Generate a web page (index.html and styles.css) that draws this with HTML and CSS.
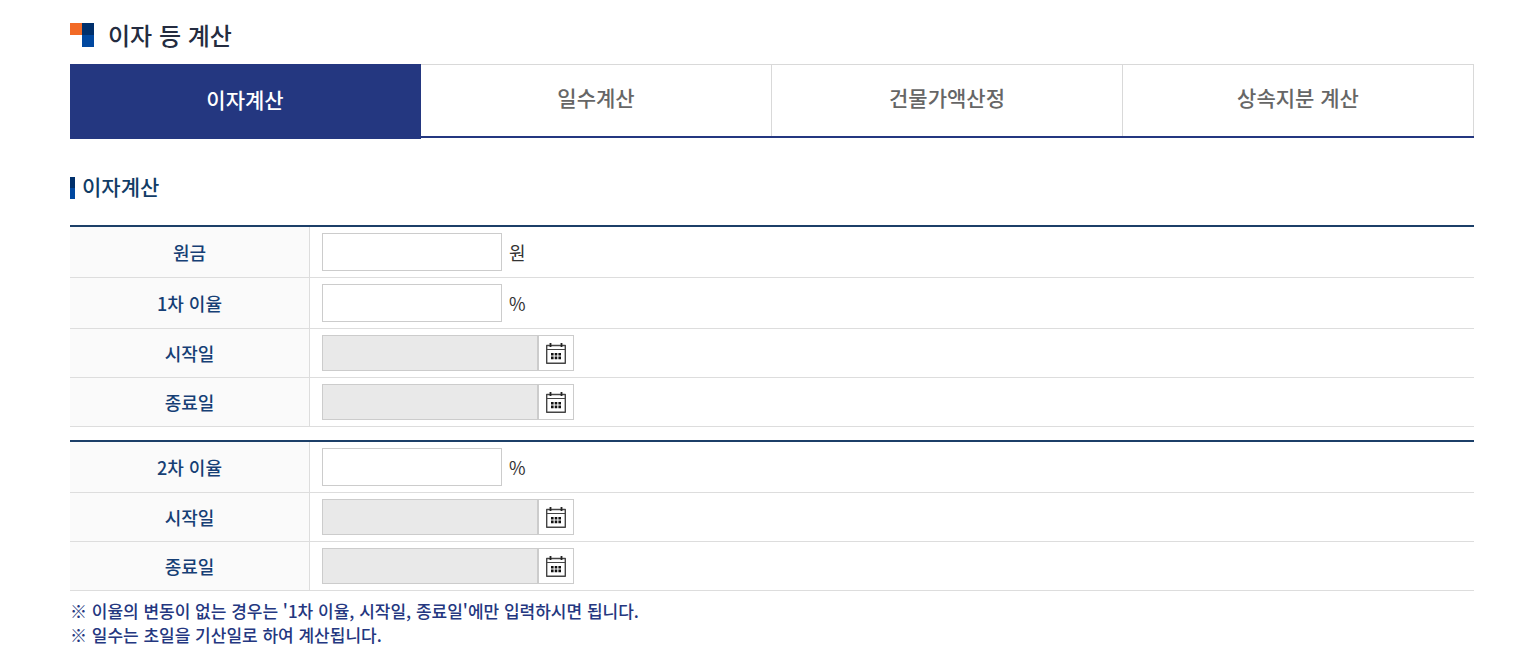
FILE: index.html
```html
<!DOCTYPE html>
<html lang="ko">
<head>
<meta charset="utf-8">
<title>이자 등 계산</title>
<link rel="stylesheet" href="styles.css">
</head>
<body>
<svg class="sprite" aria-hidden="true">
  <symbol id="calendar" viewBox="0 0 20 22">
    <path d="M.7 3.5h18.6v17.8H.7z" fill="none" stroke="#444" stroke-width="1.4" stroke-linejoin="round"/>
    <path d="M1 7.5h18" stroke="#444" stroke-width="1"/>
    <path d="M4.5 1v4M15.5 1v4" stroke="#222" stroke-width="1.8"/>
    <path d="M5 11h2.6v2.6H5zM8.7 11h2.6v2.6H8.7zM12.4 11H15v2.6h-2.6zM5 14.6h2.6v2.6H5zM8.7 14.6h2.6v2.6H8.7zM12.4 14.6H15v2.6h-2.6z" fill="#111"/>
  </symbol>
</svg>
<main class="page">
  <h1 class="page-title">
    <svg class="mark" viewBox="0 0 24 24" aria-hidden="true">
      <path fill="#f26a26" d="M0 0h12v12H0z"/>
      <path fill="#00306c" d="M12 0h12v12H12z"/>
      <path fill="#0048a0" d="M12 12h12v12H12z"/>
    </svg>
    이자 등 계산
  </h1>
  <nav class="tabs">
    <a class="tab active" href="#interest" aria-current="page">이자계산</a>
    <a class="tab" href="#days">일수계산</a>
    <a class="tab" href="#building">건물가액산정</a>
    <a class="tab" href="#inheritance">상속지분 계산</a>
  </nav>
  <h2 class="section-title">이자계산</h2>
  <form class="form">
    <table class="fields">
      <tr><th scope="row"><label for="principal">원금</label></th><td><div class="field"><input id="principal" type="text"><span>원</span></div></td></tr>
      <tr><th scope="row"><label for="rate1">1차 이율</label></th><td><div class="field"><input id="rate1" type="text"><span>%</span></div></td></tr>
      <tr><th scope="row"><label for="start1">시작일</label></th><td><div class="date"><input id="start1" type="text" readonly><button type="button" aria-label="시작일 선택"><svg><use href="#calendar"/></svg></button></div></td></tr>
      <tr><th scope="row"><label for="end1">종료일</label></th><td><div class="date"><input id="end1" type="text" readonly><button type="button" aria-label="종료일 선택"><svg><use href="#calendar"/></svg></button></div></td></tr>
    </table>
    <table class="fields">
      <tr><th scope="row"><label for="rate2">2차 이율</label></th><td><div class="field"><input id="rate2" type="text"><span>%</span></div></td></tr>
      <tr><th scope="row"><label for="start2">시작일</label></th><td><div class="date"><input id="start2" type="text" readonly><button type="button" aria-label="시작일 선택"><svg><use href="#calendar"/></svg></button></div></td></tr>
      <tr><th scope="row"><label for="end2">종료일</label></th><td><div class="date"><input id="end2" type="text" readonly><button type="button" aria-label="종료일 선택"><svg><use href="#calendar"/></svg></button></div></td></tr>
    </table>
  </form>
  <div class="notes">
    <p>※ 이율의 변동이 없는 경우는 '1차 이율, 시작일, 종료일'에만 입력하시면 됩니다.</p>
    <p>※ 일수는 초일을 기산일로 하여 계산됩니다.</p>
  </div>
</main>
</body>
</html>
```
FILE: styles.css
```css
* { box-sizing: border-box; }
body {
  margin: 0;
  background: #fff;
  color: #333;
  font: 400 18px/24px "Noto Sans CJK KR", "Noto Sans", sans-serif;
}
.sprite { position: absolute; width: 0; height: 0; }
.page { padding: 17px 54px 16px 70px; }
.page-title {
  display: flex;
  align-items: center;
  gap: 14px;
  margin: 0 0 11px;
  color: #242c40;
  font-size: 24px;
  font-weight: 500;
  line-height: 36px;
}
.mark { width: 24px; height: 24px; }
.tabs {
  display: grid;
  grid-template-columns: repeat(4, 1fr);
  height: 74px;
  border-bottom: 2px solid #243780;
}
.tab {
  display: flex;
  align-items: center;
  justify-content: center;
  border: 1px solid #d9d9d9;
  border-width: 1px 1px 0 0;
  color: #666;
  font-size: 21px;
  font-weight: 500;
  padding-bottom: 7px;
  text-decoration: none;
}
.tab.active {
  margin-bottom: -3px;
  background: #243780;
  border-color: #243780;
  color: #fff;
}
.section-title {
  display: flex;
  align-items: flex-end;
  gap: 7px;
  margin: 35px 0 26px;
  color: #113c66;
  font-size: 21px;
  font-weight: 500;
  line-height: 26px;
}
.section-title::before {
  content: "";
  width: 5px;
  height: 22px;
  background: linear-gradient(#00306c 50%, #0048a0 50%);
}
.form { display: grid; gap: 13px; }
.fields {
  width: 100%;
  table-layout: fixed;
  border-spacing: 0;
  border-top: 2px solid #1c3f68;
}
.fields th, .fields td { border-bottom: 1px solid #ddd; padding: 6px 12px; }
.fields th {
  width: 240px;
  padding: 0;
  background: #fafafa;
  border-right: 1px solid #ddd;
  color: #163f75;
  font-weight: 500;
}
.field, .date { display: flex; align-items: center; }
.field { gap: 7px; }
input {
  width: 180px;
  height: 38px;
  padding: 0 8px;
  border: 1px solid #ccc;
  border-radius: 0;
  background: #fff;
  font: inherit;
}
.date input { width: 216px; height: 36px; background: #e9e9e9; }
.date button {
  display: flex;
  align-items: center;
  justify-content: center;
  width: 36px;
  height: 36px;
  padding: 0;
  border: 1px solid #ccc;
  background: #fff;
}
.date svg { width: 20px; height: 22px; }
.notes {
  margin-top: 8px;
  color: #243780;
  font-size: 17px;
  font-weight: 500;
  line-height: 24px;
}
.notes p { margin: 0; }
```
